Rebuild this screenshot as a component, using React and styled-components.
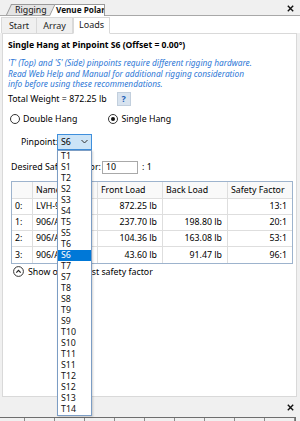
import React from 'react';
import styled, { createGlobalStyle } from 'styled-components';

const GlobalStyle = createGlobalStyle`
  html, body { margin: 0; padding: 0; background: #f0f0f0; }
  body { font-family: "Noto Sans", "Open Sans", sans-serif; font-size: 8.8px; color: #000; }
  * { box-sizing: border-box; }
`;

const Window = styled.div`
  width: 300px;
  height: 421px;
  position: relative;
  overflow: hidden;
  background: #f0f0f0;
  display: flex;
  flex-direction: column;
`;

const DocTabs = styled.div`
  height: 16px;
  flex: none;
  display: flex;
  align-items: flex-end;
  padding-left: 6px;
  border-bottom: 1px solid #a8a8a8;
  position: relative;
`;

const DocTab = styled.div`
  position: relative;
  height: 12px;
  margin-bottom: -1px;
  padding: ${p => (p.$active ? '0 0 0 7px' : '0 0 0 9px')};
  width: ${p => p.$w}px;
  margin-left: ${p => p.$ml || 0}px;
  z-index: ${p => (p.$active ? 2 : 1)};
  overflow: ${p => (p.$active ? 'hidden' : 'visible')};
  border-right: ${p => (p.$active ? '1px solid #9a9a9a' : 'none')};
  font-weight: ${p => (p.$active ? 700 : 400)};
  font-size: ${p => (p.$active ? '8.2px' : '8.8px')};
  line-height: 12px;
  color: #111;
  white-space: nowrap;
  &::before {
    content: '';
    position: absolute;
    top: 0;
    bottom: ${p => (p.$active ? '0' : '1px')};
    left: 0;
    right: ${p => (p.$active ? '-12px' : '0')};
    transform: skewX(-25deg);
    transform-origin: bottom left;
    background: ${p => (p.$active ? '#fff' : '#e4e4e4')};
    border: 1px solid #9a9a9a;
    border-bottom: none;
    z-index: -1;
  }
  span { position: relative; }
`;

const CloseX = styled.div`
  position: absolute;
  right: 6px;
  top: ${p => p.$top}px;
  width: 7px;
  height: 7px;
  display: flex;
`;

const SubTabs = styled.div`
  height: 17px;
  flex: none;
  display: flex;
  align-items: flex-end;
  background: #fff;
  padding-left: 1px;
`;

const SubTab = styled.div`
  width: ${p => p.$w}px;
  height: ${p => (p.$active ? 17 : 16)}px;
  margin-bottom: ${p => (p.$active ? '-1px' : '0')};
  background: ${p => (p.$active ? '#fff' : '#f0f0f0')};
  border: 1px solid #d9d9d9;
  border-left: ${p => (p.$first || p.$active ? '1px solid #d9d9d9' : 'none')};
  border-bottom: ${p => (p.$active ? '1px solid #fff' : 'none')};
  position: relative;
  z-index: ${p => (p.$active ? 2 : 1)};
  display: flex;
  align-items: center;
  justify-content: center;
  padding-bottom: ${p => (p.$active ? '3px' : '0')};
  font-size: 9px;
  color: #222;
`;

const Panel = styled.div`
  height: 364px;
  flex: none;
  margin: 0 3px 0 2px;
  background: #fff;
  border: 1px solid #d9d9d9;
  padding: 5px 0 0 5px;
  display: flex;
  flex-direction: column;
`;

const Title = styled.div`
  font-weight: 700;
  font-size: 8.6px;
  line-height: 12px;
  white-space: nowrap;
`;

const Note = styled.div`
  margin-top: 7px;
  color: #2d77d6;
  font-style: italic;
  line-height: 10.5px;
  font-size: 8.3px;
  white-space: nowrap;
`;

const Row = styled.div`
  display: flex;
  align-items: center;
  height: ${p => p.$h}px;
  margin-top: ${p => p.$mt}px;
  padding-left: ${p => p.$pl || 0}px;
  white-space: nowrap;
`;

const HelpButton = styled.div`
  width: 14px;
  height: 14px;
  margin-left: 10px;
  background: #d8e3ef;
  border: 1px solid #c2cfdd;
  color: #1c5fb8;
  font-weight: 700;
  font-size: 9px;
  display: flex;
  align-items: center;
  justify-content: center;
`;

const RadioLabel = styled.label`
  display: flex;
  align-items: center;
  gap: 3px;
  margin-right: ${p => p.$mr || 0}px;
`;

const RadioCircle = styled.span`
  width: 10px;
  height: 10px;
  border-radius: 50%;
  border: 1px solid #333;
  background: #fff;
  display: flex;
  align-items: center;
  justify-content: center;
  &::after {
    content: '';
    width: 4px;
    height: 4px;
    border-radius: 50%;
    background: ${p => (p.$on ? '#111' : 'transparent')};
  }
`;

const FieldLabel = styled.span`
  width: ${p => p.$w}px;
  flex: none;
  white-space: nowrap;
`;

const SelectWrap = styled.div`
  position: relative;
  width: 35px;
  height: 16px;
`;

const SelectBox = styled.div`
  width: 100%;
  height: 100%;
  background: #cce4f7;
  border: 1px solid #3f8fdc;
  display: flex;
  align-items: center;
  justify-content: space-between;
  padding: 0 3px 0 3px;
`;

const DropList = styled.div`
  position: absolute;
  top: 16px;
  left: 0;
  width: 35px;
  background: #fff;
  border: 1px solid #7c9dc4;
  box-shadow: 1px 1px 2px rgba(0, 0, 0, 0.18);
  z-index: 20;
`;

const DropItem = styled.div`
  height: 11px;
  line-height: 11px;
  padding-left: 3px;
  background: ${p => (p.$sel ? '#0078d7' : 'transparent')};
  color: ${p => (p.$sel ? '#fff' : '#111')};
`;

const NumInput = styled.div`
  width: 36px;
  height: 13px;
  border: 1px solid #a9a9a9;
  display: flex;
  align-items: center;
  padding-left: 3px;
`;

const Table = styled.div`
  margin: 7px 0 0 3px;
  width: 282px;
  border: 1px solid #9db3cd;
  display: grid;
  grid-template-columns: 21px 65px 65px 65px 1fr;
`;

const Cell = styled.div`
  height: ${p => (p.$head ? 17 : 16)}px;
  display: flex;
  align-items: center;
  justify-content: ${p => (p.$num ? 'flex-end' : 'flex-start')};
  padding: ${p => (p.$num ? '0 5px 0 0' : '0 0 0 3px')};
  border-right: ${p => (p.$last ? 'none' : '1px solid #dedede')};
  border-bottom: ${p => (p.$lastRow ? 'none' : '1px solid #dedede')};
  background: ${p => (p.$head ? '#f9f9f9' : '#fff')};
  white-space: nowrap;
  overflow: hidden;
`;

const ShowRow = styled.div`
  display: flex;
  align-items: center;
  gap: 4px;
  margin: 2px 0 0 5px;
  height: 12px;
  white-space: nowrap;
`;

const BottomBar = styled.div`
  height: 20px;
  flex: none;
  position: relative;
`;

const Ruler = styled.div`
  height: 4px;
  flex: none;
  margin-right: 4px;
  border-top: 1px solid #6e6e6e;
  border-right: 1px solid #6e6e6e;
  background: repeating-linear-gradient(
    to right,
    transparent 0,
    transparent 24px,
    #8a8a8a 24px,
    #8a8a8a 25px,
    transparent 25px,
    transparent 30px
  );
`;

const XIcon = () => (
  <svg width="7" height="7" viewBox="0 0 7 7">
    <path d="M0.8 0.8 L6.2 6.2 M6.2 0.8 L0.8 6.2" stroke="#111" strokeWidth="1.4" />
  </svg>
);

const Chevron = () => (
  <svg width="7" height="5" viewBox="0 0 7 5">
    <path d="M0.5 1 L3.5 4 L6.5 1" fill="none" stroke="#333" strokeWidth="1" />
  </svg>
);

const UpCircle = () => (
  <svg width="11" height="11" viewBox="0 0 11 11">
    <circle cx="5.5" cy="5.5" r="4.9" fill="#fff" stroke="#333" strokeWidth="1" />
    <path d="M3.3 6.6 L5.5 4.4 L7.7 6.6" fill="none" stroke="#222" strokeWidth="1.2" />
  </svg>
);

const pins = ['T1', 'S1', 'T2', 'S2', 'S3', 'S4', 'T5', 'S5', 'T6', 'S6', 'T7', 'S7', 'T8', 'S8', 'T9', 'S9', 'T10', 'S10', 'T11', 'S11', 'T12', 'S12', 'S13', 'T14'];

const rows = [
  ['0:', 'LVH-906', '872.25 lb', '', '13:1'],
  ['1:', '906/AS', '237.70 lb', '198.80 lb', '20:1'],
  ['2:', '906/AS', '104.36 lb', '163.08 lb', '53:1'],
  ['3:', '906/AS', '43.60 lb', '91.47 lb', '96:1'],
];

const heads = ['', 'Name', 'Front Load', 'Back Load', 'Safety Factor'];

export default function App() {
  return (
    <Window>
      <GlobalStyle />
      <DocTabs>
        <DocTab $w={47}><span>Rigging</span></DocTab>
        <DocTab $active $w={56} $ml={-4}><span>Venue Polar</span></DocTab>
        <CloseX $top={5}><XIcon /></CloseX>
      </DocTabs>
      <SubTabs>
        <SubTab $first $w={36}>Start</SubTab>
        <SubTab $w={36}>Array</SubTab>
        <SubTab $active $w={37}>Loads</SubTab>
      </SubTabs>
      <Panel>
        <Title>Single Hang at Pinpoint S6 (Offset = 0.00°)</Title>
        <Note>
          'T' (Top) and 'S' (Side) pinpoints require different rigging hardware.<br />
          Read Web Help and Manual for additional rigging consideration<br />
          info before using these recommendations.
        </Note>
        <Row $h={14} $mt={2}>
          <span>Total Weight = 872.25 lb</span>
          <HelpButton>?</HelpButton>
        </Row>
        <Row $h={12} $mt={7} $pl={2}>
          <RadioLabel $mr={31}><RadioCircle />Double Hang</RadioLabel>
          <RadioLabel><RadioCircle $on />Single Hang</RadioLabel>
        </Row>
        <Row $h={16} $mt={9} $pl={13}>
          <FieldLabel $w={36}>Pinpoint:</FieldLabel>
          <SelectWrap>
            <SelectBox><span>S6</span><Chevron /></SelectBox>
            <DropList>
              {pins.map(p => (
                <DropItem key={p} $sel={p === 'S6'}>{p}</DropItem>
              ))}
            </DropList>
          </SelectWrap>
        </Row>
        <Row $h={13} $mt={11} $pl={3}>
          <FieldLabel $w={91}>Desired Safety Factor:</FieldLabel>
          <NumInput>10</NumInput>
          <span style={{ marginLeft: 4 }}>: 1</span>
        </Row>
        <Table>
          {heads.map((h, i) => (
            <Cell key={'h' + i} $head $last={i === 4}>{h}</Cell>
          ))}
          {rows.map((r, ri) =>
            r.map((c, ci) => (
              <Cell
                key={ri + '-' + ci}
                $num={ci >= 2}
                $last={ci === 4}
                $lastRow={ri === rows.length - 1}
              >
                {c}
              </Cell>
            ))
          )}
        </Table>
        <ShowRow>
          <UpCircle />
          <span>Show only lowest safety factor</span>
        </ShowRow>
      </Panel>
      <BottomBar>
        <CloseX $top={7}><XIcon /></CloseX>
      </BottomBar>
      <Ruler />
    </Window>
  );
}
